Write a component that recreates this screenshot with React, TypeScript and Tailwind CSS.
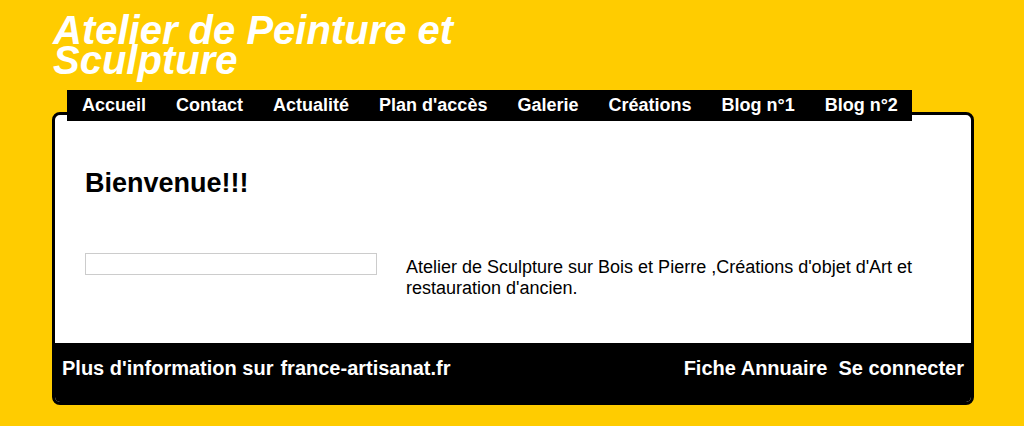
import React from 'react';

const menu = ['Accueil', 'Contact', 'Actualité', "Plan d'accès", 'Galerie', 'Créations', 'Blog n°1', 'Blog n°2'];

const App: React.FC = () => {
  return (
    <div className="min-h-screen w-full bg-[#ffcc00] font-['Liberation_Sans',Arial,sans-serif]">
      <div className="ml-[52px] w-[922px] pt-[15px]">
        <h1 className="pl-[1px] text-[40px] leading-[30px] font-bold italic text-white">
          Atelier de Peinture et
          <br />
          Sculpture
        </h1>

        <nav className="relative z-10 mt-[15px] ml-[15px] flex h-[31px] w-[845px] items-center bg-black">
          {menu.map(item => (
            <a key={item} href="#" className="px-[15px] text-[18px] leading-[31px] font-bold whitespace-nowrap text-white">
              {item}
            </a>
          ))}
        </nav>

        <div className="-mt-[9px] overflow-hidden rounded-[8px] border-[3px] border-black bg-white">
          <div className="h-[228px] px-[30px] pt-[53px]">
            <h2 className="text-[27px] leading-[31px] font-bold text-black">Bienvenue!!!</h2>
            <div className="mt-[54px] flex items-start">
              <div className="h-[22px] w-[292px] border border-[#cccccc] bg-white"></div>
              <p className="mt-[4px] ml-[29px] w-[530px] text-[18px] leading-[21px] text-black">
                Atelier de Sculpture sur Bois et Pierre ,Créations d'objet d'Art et restauration d'ancien.
              </p>
            </div>
          </div>
          <div className="flex h-[59px] items-start justify-between bg-black px-[7px] pt-[14px] text-[20px] leading-[23px] font-bold text-white">
            <div className="flex gap-[7px]">
              <span>Plus d'information sur</span>
              <a href="#">france-artisanat.fr</a>
            </div>
            <div className="flex gap-[11px]">
              <a href="#">Fiche Annuaire</a>
              <a href="#">Se connecter</a>
            </div>
          </div>
        </div>
      </div>
    </div>
  );
};

export default App;
